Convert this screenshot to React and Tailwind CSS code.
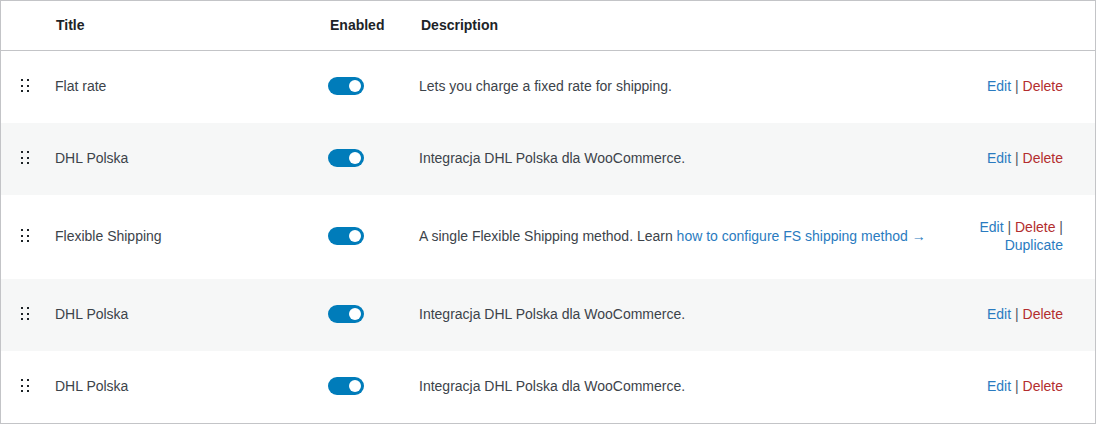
const methods = [
  { title: 'Flat rate', desc: 'Lets you charge a fixed rate for shipping.' },
  { title: 'DHL Polska', desc: 'Integracja DHL Polska dla WooCommerce.' },
  { title: 'Flexible Shipping', desc: 'A single Flexible Shipping method. Learn ', link: 'how to configure FS shipping method →', duplicate: true },
  { title: 'DHL Polska', desc: 'Integracja DHL Polska dla WooCommerce.' },
  { title: 'DHL Polska', desc: 'Integracja DHL Polska dla WooCommerce.' },
];

function DragHandle() {
  return (
    <svg width="8" height="14" viewBox="0 0 8 14" className="shrink-0">
      {[0, 6].map((x) =>
        [0, 6, 11].map((y) => <rect key={`${x}-${y}`} x={x} y={y} width="2" height="2" fill="#1d2327" />)
      )}
    </svg>
  );
}

function Toggle() {
  return (
    <div className="w-9 h-[18px] rounded-full bg-[#007cba] flex items-center justify-end pr-[3px]">
      <div className="w-3 h-3 rounded-full bg-white" />
    </div>
  );
}

export default function App() {
  return (
    <div
      className="w-[1096px] h-[424px] bg-white border border-[#c3c4c7] text-[14px] leading-[18px] text-[#3c434a]"
      style={{ fontFamily: '"Liberation Sans", Arial, sans-serif' }}
    >
      <div className="h-[50px] pb-[2px] border-b border-[#c3c4c7] flex items-center font-bold text-[#1d2327]">
        <div className="w-[55px] shrink-0" />
        <div className="w-[274px] shrink-0">Title</div>
        <div className="w-[91px] shrink-0">Enabled</div>
        <div>Description</div>
      </div>
      {methods.map((m, i) => (
        <div
          key={i}
          className={`min-h-[72px] pt-[23px] pb-[25px] flex items-center ${i % 2 === 1 ? 'bg-[#f6f7f7]' : 'bg-white'}`}
        >
          <div className="w-[54px] shrink-0 pl-[20px] flex items-center">
            <DragHandle />
          </div>
          <div className="w-[273px] shrink-0">{m.title}</div>
          <div className="w-[91px] shrink-0">
            <Toggle />
          </div>
          <div className="flex-1">
            {m.desc}
            {m.link && <a className="text-[#2a7bc0]">{m.link}</a>}
          </div>
          <div className="w-[110px] shrink-0 text-right pr-8 box-content">
            <a className="text-[#2a7bc0]">Edit</a>
            <span className="text-[#50575e]"> | </span>
            <a className="text-[#b32d2e]">Delete</a>
            {m.duplicate && (
              <>
                <span className="text-[#50575e]"> | </span>
                <a className="text-[#2a7bc0]">Duplicate</a>
              </>
            )}
          </div>
        </div>
      ))}
    </div>
  );
}
